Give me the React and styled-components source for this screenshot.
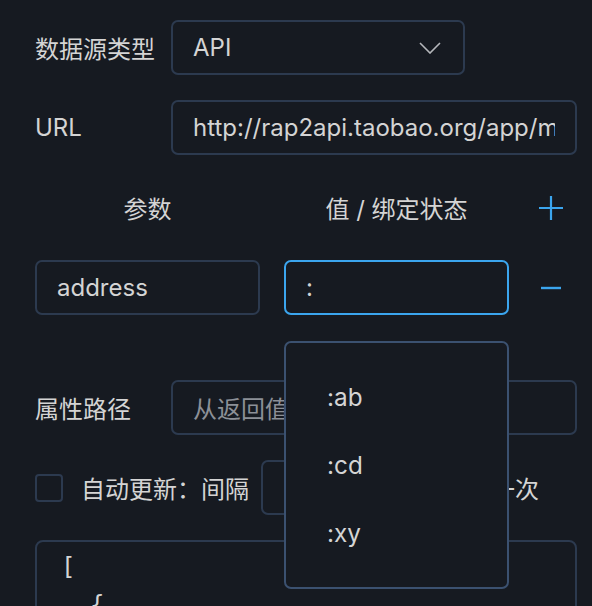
import styled, { createGlobalStyle } from "styled-components";

const GlobalStyle = createGlobalStyle`
  html, body {
    margin: 0;
    background: #161a21;
  }
  body {
    font-family: "Inter", "Noto Sans CJK SC", sans-serif;
    font-size: 24px;
    color: #d4d4d4;
  }
`;

const Chevron = () => (
  <svg width="22" height="12" viewBox="0 0 22 12" fill="none">
    <path d="M1 1l10 10L21 1" stroke="#b5b7bb" strokeWidth="1.6" />
  </svg>
);

const PlusIcon = () => (
  <svg width="24" height="24" viewBox="0 0 24 24" fill="none">
    <path d="M12 0v24M0 12h24" stroke="#3ba5ee" strokeWidth="2.2" />
  </svg>
);

const MinusIcon = () => (
  <svg width="20" height="4" viewBox="0 0 20 4" fill="none">
    <path d="M0 2h20" stroke="#3ba5ee" strokeWidth="2.4" />
  </svg>
);

const options = [":ab", ":cd", ":xy"];

export default function App() {
  return (
    <Root>
      <GlobalStyle />
      <FieldRow>
        <Label>数据源类型</Label>
        <Select>
          <span>API</span>
          <Chevron />
        </Select>
      </FieldRow>
      <FieldRow>
        <Label>URL</Label>
        <Input>
          <Value>http://rap2api.taobao.org/app/mock/12345/list</Value>
        </Input>
      </FieldRow>

      <ParamGrid>
        <HeadCell>参数</HeadCell>
        <HeadCell>值 / 绑定状态</HeadCell>
        <IconButton>
          <PlusIcon />
        </IconButton>

        <Input>
          <Value>address</Value>
        </Input>
        <ValueCell>
          <Input $focused>
            <Value>:</Value>
          </Input>
          <Dropdown>
            {options.map((o) => (
              <Option key={o}>{o}</Option>
            ))}
          </Dropdown>
        </ValueCell>
        <IconButton>
          <MinusIcon />
        </IconButton>
      </ParamGrid>

      <FieldRow>
        <Label>属性路径</Label>
        <Input $placeholder>
          <Value>从返回值中提取数据的路径</Value>
        </Input>
      </FieldRow>

      <AutoRow>
        <Checkbox />
        <span>自动更新：间隔</span>
        <SmallInput>
          <Value>5</Value>
        </SmallInput>
        <span>秒更新一次</span>
      </AutoRow>

      <CodeBox>
        {`[
  {
    "name": "address",
    "value": ":ab"
  }
]`}
      </CodeBox>
    </Root>
  );
}

const Root = styled.div`
  display: flex;
  flex-direction: column;
  gap: 25px;
  padding: 20px 15px 0 35px;
  height: 606px;
  box-sizing: border-box;
  overflow: hidden;
`;

const FieldRow = styled.div`
  display: grid;
  grid-template-columns: 136px minmax(0, 1fr);
  align-items: center;
`;

const Label = styled.div`
  white-space: nowrap;
`;

const Input = styled.div`
  height: 55px;
  min-width: 0;
  box-sizing: border-box;
  display: flex;
  align-items: center;
  padding: 0 20px;
  border: 2px solid ${(p) => (p.$focused ? "#3ba5ee" : "#2c3a4f")};
  border-radius: 7px;
  white-space: nowrap;
  overflow: hidden;
  color: ${(p) => (p.$placeholder ? "#8c9097" : "#d4d4d4")};
`;

const Value = styled.span`
  flex: 1;
  min-width: 0;
  overflow: hidden;
  font-size: 24px;
`;

const Select = styled(Input)`
  width: 294px;
  justify-content: space-between;
  padding-right: 22px;
`;

const ParamGrid = styled.div`
  display: grid;
  grid-template-columns: 225px 225px 36px;
  grid-template-rows: 55px 55px;
  column-gap: 24px;
  row-gap: 25px;
  align-items: center;
  margin-bottom: 40px;
`;

const HeadCell = styled.div`
  text-align: center;
`;

const IconButton = styled.div`
  display: flex;
  justify-content: center;
  align-items: center;
`;

const ValueCell = styled.div`
  position: relative;
`;

const Dropdown = styled.div`
  position: absolute;
  top: calc(100% + 26px);
  left: 0;
  width: 225px;
  box-sizing: border-box;
  padding: 20px 0;
  background: #161a21;
  border: 2px solid #3b5170;
  border-radius: 7px;
  z-index: 10;
`;

const Option = styled.div`
  height: 68px;
  display: flex;
  align-items: center;
  padding-left: 41px;
  font-size: 24.3px;
`;

const AutoRow = styled.div`
  display: flex;
  align-items: center;
  white-space: nowrap;
`;

const Checkbox = styled.div`
  width: 28px;
  height: 28px;
  box-sizing: border-box;
  border: 2px solid #2c3a4f;
  border-radius: 4px;
  margin-right: 18px;
`;

const SmallInput = styled(Input)`
  width: 142px;
  margin: 0 16px 0 12px;
`;

const CodeBox = styled.pre`
  margin: 0;
  padding: 6px 24px;
  min-height: 200px;
  border: 2px solid #2c3a4f;
  border-radius: 8px;
  font-family: "DejaVu Sans Mono", monospace;
  font-size: 24px;
  line-height: 38px;
  color: #d4d4d4;
`;
